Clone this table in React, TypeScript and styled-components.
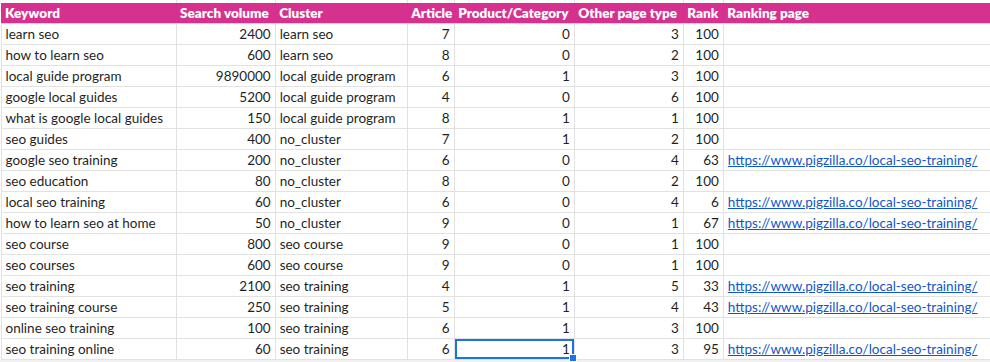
import styled, { createGlobalStyle } from "styled-components";

const GlobalStyle = createGlobalStyle`
  html, body {
    margin: 0;
    padding: 0;
    background: #f1f1f1;
  }
  body {
    font-family: "Lato", "Liberation Sans", sans-serif;
  }
`;

interface Row {
  keyword: string;
  volume: number;
  cluster: string;
  article: number;
  product: number;
  other: number;
  rank: number;
  page?: string;
}

const URL = "https://www.pigzilla.co/local-seo-training/";

const rows: Row[] = [
  { keyword: "learn seo", volume: 2400, cluster: "learn seo", article: 7, product: 0, other: 3, rank: 100 },
  { keyword: "how to learn seo", volume: 600, cluster: "learn seo", article: 8, product: 0, other: 2, rank: 100 },
  { keyword: "local guide program", volume: 9890000, cluster: "local guide program", article: 6, product: 1, other: 3, rank: 100 },
  { keyword: "google local guides", volume: 5200, cluster: "local guide program", article: 4, product: 0, other: 6, rank: 100 },
  { keyword: "what is google local guides", volume: 150, cluster: "local guide program", article: 8, product: 1, other: 1, rank: 100 },
  { keyword: "seo guides", volume: 400, cluster: "no_cluster", article: 7, product: 1, other: 2, rank: 100 },
  { keyword: "google seo training", volume: 200, cluster: "no_cluster", article: 6, product: 0, other: 4, rank: 63, page: URL },
  { keyword: "seo education", volume: 80, cluster: "no_cluster", article: 8, product: 0, other: 2, rank: 100 },
  { keyword: "local seo training", volume: 60, cluster: "no_cluster", article: 6, product: 0, other: 4, rank: 6, page: URL },
  { keyword: "how to learn seo at home", volume: 50, cluster: "no_cluster", article: 9, product: 0, other: 1, rank: 67, page: URL },
  { keyword: "seo course", volume: 800, cluster: "seo course", article: 9, product: 0, other: 1, rank: 100 },
  { keyword: "seo courses", volume: 600, cluster: "seo course", article: 9, product: 0, other: 1, rank: 100 },
  { keyword: "seo training", volume: 2100, cluster: "seo training", article: 4, product: 1, other: 5, rank: 33, page: URL },
  { keyword: "seo training course", volume: 250, cluster: "seo training", article: 5, product: 1, other: 4, rank: 43, page: URL },
  { keyword: "online seo training", volume: 100, cluster: "seo training", article: 6, product: 1, other: 3, rank: 100 },
  { keyword: "seo training online", volume: 60, cluster: "seo training", article: 6, product: 1, other: 3, rank: 95, page: URL },
];

const columns = [
  { title: "Keyword", width: 175 },
  { title: "Search volume", width: 99 },
  { title: "Cluster", width: 132 },
  { title: "Article", width: 47 },
  { title: "Product/Category", width: 120 },
  { title: "Other page type", width: 109 },
  { title: "Rank", width: 40 },
  { title: "Ranking page", width: 267 },
];

export default function App() {
  return (
    <>
      <GlobalStyle />
      <Sheet>
        <Table>
          <colgroup>
            <col style={{ width: 1 }} />
            {columns.map((c) => (
              <col key={c.title} style={{ width: c.width }} />
            ))}
          </colgroup>
          <tbody>
            <TopStrip>
              <td />
              {columns.map((c) => (
                <td key={c.title} />
              ))}
            </TopStrip>
            <HeaderRow>
              <td />
              {columns.map((c) => (
                <HeadCell key={c.title}>{c.title}</HeadCell>
              ))}
            </HeaderRow>
            {rows.map((r, i) => {
              const last = i === rows.length - 1;
              return (
                <DataRow key={i}>
                  <td />
                  <Cell>{r.keyword}</Cell>
                  <Cell $num>{r.volume}</Cell>
                  <Cell>{r.cluster}</Cell>
                  <Cell $num>{r.article}</Cell>
                  <Cell $num $selected={last}>
                    {r.product}
                    {last && <FillHandle />}
                  </Cell>
                  <Cell $num>{r.other}</Cell>
                  <Cell $num>{r.rank}</Cell>
                  <Cell>{r.page && <Link href={r.page}>{r.page}</Link>}</Cell>
                </DataRow>
              );
            })}
          </tbody>
        </Table>
      </Sheet>
    </>
  );
}

const Sheet = styled.div`
  width: 990px;
  height: 362px;
  overflow: hidden;
  position: relative;
`;

const Table = styled.table`
  border-collapse: collapse;
  table-layout: fixed;
  width: 991px;
  background: #fff;
  font-size: 13.5px;
  color: #1f1f1f;

  td {
    padding: 0;
  }
  td:first-child {
    border: none;
    background: #fff;
  }
`;

const TopStrip = styled.tr`
  height: 3px;
  td {
    border-right: 1px solid #e2e2e2;
  }
`;

const HeaderRow = styled.tr`
  height: 20px;
  background: #d6318f;
`;

const HeadCell = styled.td`
  color: #fff;
  font-weight: 800;
  font-size: 13.5px;
  padding: 0 3px 0 4px !important;
  white-space: nowrap;
  overflow: hidden;
  border-bottom: 1px solid #f4c6df;
`;

const DataRow = styled.tr`
  height: 21px;
`;

const Cell = styled.td<{ $num?: boolean; $selected?: boolean }>`
  position: relative;
  border: 1px solid #e2e2e2;
  padding: 0 4px !important;
  text-align: ${(p) => (p.$num ? "right" : "left")};
  white-space: nowrap;
  overflow: ${(p) => (p.$selected ? "visible" : "hidden")};
  box-shadow: ${(p) => (p.$selected ? "inset 0 0 0 2px #1a73e8" : "none")};
`;

const FillHandle = styled.span`
  position: absolute;
  right: -3px;
  bottom: -3px;
  width: 6px;
  height: 6px;
  background: #1a73e8;
  border: 1px solid #fff;
`;

const Link = styled.a`
  color: #1155cc;
  text-decoration: underline;
`;
